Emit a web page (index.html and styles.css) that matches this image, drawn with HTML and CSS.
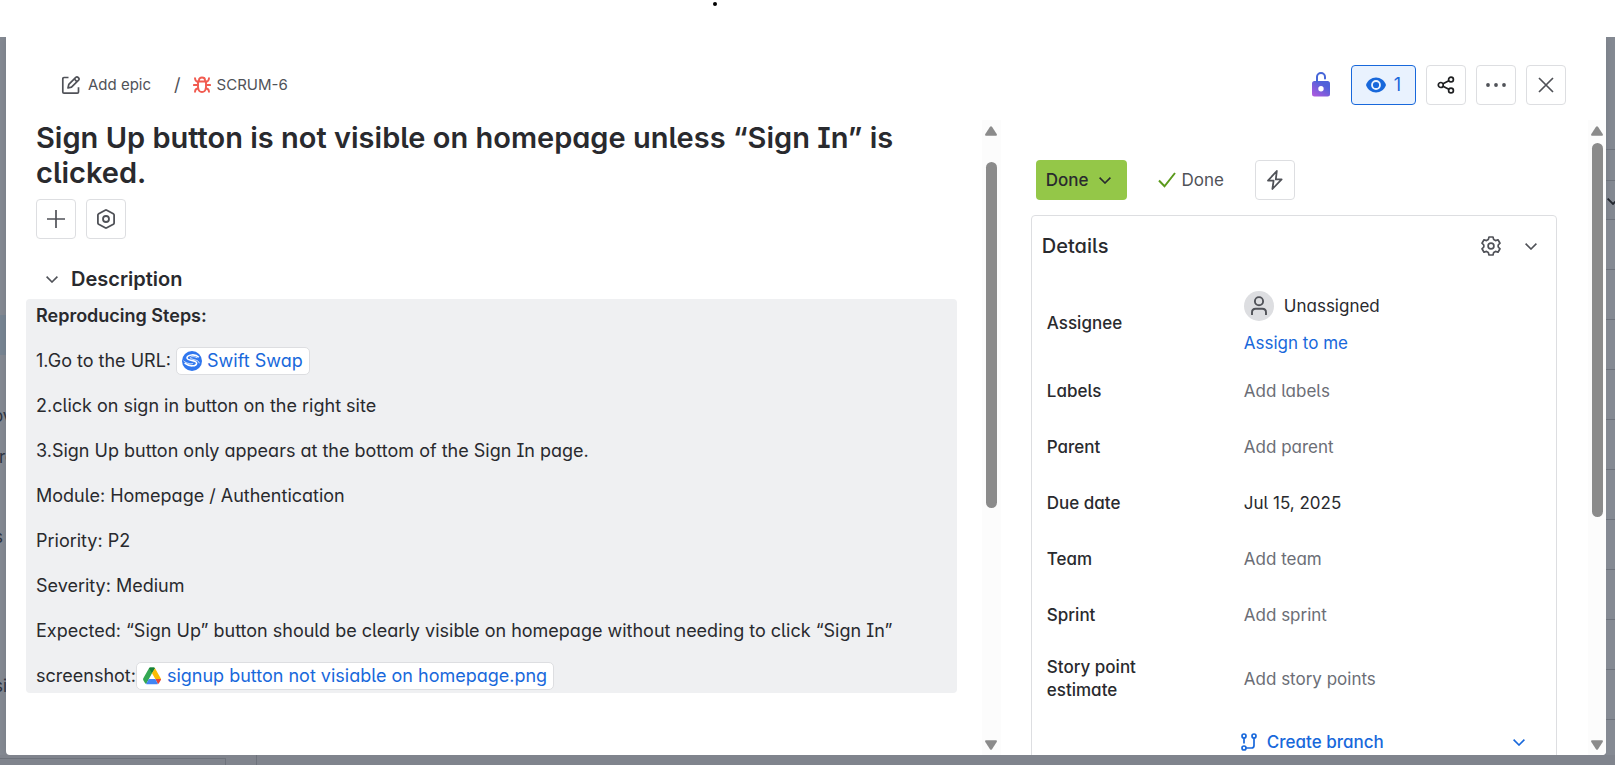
FILE: index.html
```html
<!DOCTYPE html>
<html lang="en">
<head>
<meta charset="utf-8">
<title>SCRUM-6</title>
<link rel="stylesheet" href="styles.css">
</head>
<body>
<div class="topbar"><span class="dot"></span></div>
<div class="stage">
  <div class="edge edge-left" aria-hidden="true">
    <span class="edge-band"></span>
    <span class="edge-text">ov</span>
    <span class="edge-text edge-r">re</span>
    <span class="edge-text edge-s">s</span>
    <span class="edge-text edge-si">si</span>
  </div>
  <main class="modal">
    <header class="header">
      <nav class="crumbs" aria-label="Breadcrumb">
        <a class="crumb" href="#">
          <svg width="20" height="20" viewBox="0 0 20 20" fill="none" stroke="#505258" stroke-width="1.7"><path d="M7.5 2.5H3Q1.8 2.5 1.8 3.7V17Q1.8 18.2 3 18.2H16.3Q17.5 18.2 17.5 17V12.2"/><path d="M7 13L7.8 9.4L14.8 2.4Q16 1.4 17.2 2.5Q18.8 3.9 17.6 5.2L10.5 12.2Z" stroke-linejoin="round"/><path d="M13.3 4L16.1 6.8"/></svg>
          <span>Add epic</span>
        </a>
        <span class="slash">/</span>
        <a class="crumb crumb-key" href="#">
          <svg width="18" height="18" viewBox="0 0 18 18" fill="none" stroke="#f15b50" stroke-width="1.9" stroke-linecap="round"><path d="M5 5.5H13V11.500Q12.500 16 9 16Q5.500 16 5 11.500Z"/><path d="M6 5.3V4Q6 1.5 9 1.5Q12 1.5 12 4V5.3M.9 9H5M13 9H17.1M2 2.3Q2.2 5.5 5 6M16 2.3Q15.8 5.5 13 6M5.3 12.2Q2.2 12.5 2 15.7M12.7 12.2Q15.8 12.5 16 15.7"/></svg>
          <span>SCRUM-6</span>
        </a>
      </nav>
      <div class="actions">
        <button class="lock" aria-label="Restrictions">
          <svg width="18" height="25" viewBox="0 0 18 25"><defs><linearGradient id="lg" x1="0" y1="1" x2=".8" y2="0"><stop offset="0" stop-color="#b558df"/><stop offset=".8" stop-color="#5061d9"/></linearGradient></defs><rect y="9" width="18" height="15.500" rx="2.500" fill="url(#lg)"/><path d="M5 9.500V5A4 4 0 0 1 13 5V6.500" fill="none" stroke="#4665d8" stroke-width="2" stroke-linecap="round"/><circle cx="9" cy="16.700" r="2.700" fill="#fff"/></svg>
        </button>
        <button class="btn watch" aria-label="Watchers: 1">
          <svg width="20" height="16" viewBox="0 0 20 16"><path d="M10 .5C14.500.500 18.300 3.300 20 8C18.300 12.700 14.500 15.500 10 15.500S1.700 12.700 0 8C1.700 3.300 5.500.500 10 .500Z" fill="#1868db"/><circle cx="10" cy="8" r="4" fill="#1868db" stroke="#e9f2fe" stroke-width="1.800"/></svg>
          <span>1</span>
        </button>
        <button class="btn" aria-label="Share">
          <svg width="18" height="18" viewBox="0 0 18 18" fill="none" stroke="#1e1f21" stroke-width="1.700"><circle cx="3.800" cy="9" r="2.500"/><circle cx="14" cy="3.500" r="2.400"/><circle cx="14" cy="14.500" r="2.400"/><path d="M6 7.800L11.800 4.700M6 10.200L11.800 13.300"/></svg>
        </button>
        <button class="btn" aria-label="More">
          <svg width="20" height="4" viewBox="0 0 20 4" fill="#505258"><circle cx="2" cy="2" r="1.900"/><circle cx="10" cy="2" r="1.900"/><circle cx="18" cy="2" r="1.900"/></svg>
        </button>
        <button class="btn" aria-label="Close">
          <svg width="16" height="16" viewBox="0 0 16 16" stroke="#505258" stroke-width="1.700"><path d="M1 1L15 15M15 1L1 15"/></svg>
        </button>
      </div>
    </header>
    <div class="panes">
      <section class="pane-main">
        <h1>Sign Up button is not visible on homepage unless “Sign In” is clicked.</h1>
        <div class="tools">
          <button class="btn" aria-label="Add"><svg width="18" height="18" viewBox="0 0 18 18" stroke="#505258" stroke-width="1.700"><path d="M9 0V18M0 9H18"/></svg></button>
          <button class="btn" aria-label="Apps"><svg width="20" height="20" viewBox="0 0 20 20" fill="none" stroke="#505258" stroke-width="1.800"><path d="M9.200 1.200Q10 .800 10.800 1.200L17.300 4.700Q18.100 5.200 18.100 6V14Q18.100 14.800 17.300 15.300L10.800 18.800Q10 19.200 9.200 18.800L2.700 15.300Q1.900 14.800 1.900 14V6Q1.900 5.200 2.700 4.700Z"/><circle cx="10" cy="10" r="3"/></svg></button>
        </div>
        <h2 class="section-title"><button class="plain" aria-label="Collapse description"><svg width="12" height="7" viewBox="0 0 12 7" fill="none" stroke="#505258" stroke-width="1.600"><path d="M.6.6L6 6L11.400.6"/></svg></button>Description</h2>
        <div class="description">
          <p><strong>Reproducing Steps:</strong></p>
          <p>1.Go to the URL: <a class="chip" href="#"><svg width="20" height="20" viewBox="0 0 20 20"><circle cx="10" cy="10" r="10" fill="#2f76ee"/><path d="M16.800 6.200C13.500 2.600 5.200 3.500 5 6.900C4.800 10.300 14.700 8.700 14.600 12.200C14.500 15.400 7.500 16 2.600 12.200" fill="none" stroke="#fff" stroke-width="1.600"/><path d="M15.300 6.800C11.500 4.800 8.100 5.700 8.200 6.900C8.400 8.500 17.200 8.500 17.300 12.300M1.500 9.800C4.500 12.800 10.600 13.400 11.200 12.200" fill="none" stroke="#fff" stroke-width=".8"/></svg>Swift Swap</a></p>
          <p>2.click on sign in button on the right site</p>
          <p>3.Sign Up button only appears at the bottom of the Sign In page.</p>
          <p>Module: Homepage / Authentication</p>
          <p>Priority: P2</p>
          <p>Severity: Medium</p>
          <p>Expected: “Sign Up” button should be clearly visible on homepage without needing to click “Sign In”</p>
          <p>screenshot:<a class="chip" href="#"><svg width="20" height="18" viewBox="-1 0 20 17"><path d="M6 .8Q6.400 0 7.300 0H10.700Q11.600 0 12 .8L9 5.700L3.200 16.500Q2.300 16.200 1.800 15.300L.3 12.700Q-.2 11.700.3 10.800Z" fill="#34a853"/><path d="M6 .8Q6.400 0 7.300 0H10.700Q11.600 0 12 .8L9 5.700Z" fill="#188038"/><path d="M12 .8L17.700 10.800Q18 11.300 18 11.500H12.300L9 5.700Z" fill="#fbbc04"/><path d="M12.300 11.500H18Q18 12.300 17.700 12.800L16.200 15.300Q15.800 16.200 14.900 16.500Z" fill="#ea4335"/><path d="M5.800 11.500H12.300L14.900 16.500Q14.500 16.700 14 16.700H4Q3.500 16.700 3.100 16.500Z" fill="#4285f4"/></svg>signup button not visiable on homepage.png</a></p>
        </div>
      </section>
      <div class="scroll scroll-main" aria-hidden="true">
        <svg width="12" height="10" viewBox="0 0 12 10"><path d="M5 .8Q6-.4 7 .8L11.700 8Q12.400 9.700 11 9.800H1Q-.4 9.700.3 8Z" fill="#8b8b8b"/></svg>
        <span class="thumb"></span>
        <svg class="down" width="12" height="10" viewBox="0 0 12 10"><path d="M5 9.200Q6 10.400 7 9.200L11.700 2Q12.400.300 11 .200H1Q-.4.300.3 2Z" fill="#8b8b8b"/></svg>
      </div>
      <aside class="pane-side">
        <div class="status">
          <button class="btn-status">Done<svg width="12" height="7" viewBox="0 0 12 7" fill="none" stroke="#292a2e" stroke-width="1.600"><path d="M.6.6L6 6L11.400.6"/></svg></button>
          <span class="resolution"><svg width="18" height="16" viewBox="0 0 18 16" fill="none" stroke="#5b9a1c" stroke-width="2"><path d="M1 8.500L6.500 14.300L17 1"/></svg>Done</span>
          <button class="btn" aria-label="Automation"><svg width="16" height="20" viewBox="0 0 16 20" fill="none" stroke="#505258" stroke-width="1.800" stroke-linejoin="round"><path d="M9.800 1L1 10.600H6.600L5.400 19L14.600 9.400H8.800Z"/></svg></button>
        </div>
        <section class="details">
          <div class="details-head">
            <h2>Details</h2>
            <button class="plain" aria-label="Configure"><svg width="20" height="20" viewBox="0 0 20 20" fill="none" stroke="#505258" stroke-width="1.700" stroke-linejoin="round"><path d="M8 1H12L12.700 3.600L14.500 4.600L17 3.800L19 7.200L17.200 9V11L19 12.800L17 16.200L14.500 15.400L12.700 16.400L12 19H8L7.300 16.400L5.500 15.400L3 16.200L1 12.800L2.800 11V9L1 7.200L3 3.800L5.500 4.600L7.300 3.600Z"/><circle cx="10" cy="10" r="2.900"/></svg></button>
            <button class="plain" aria-label="Collapse details"><svg width="12" height="7" viewBox="0 0 12 7" fill="none" stroke="#505258" stroke-width="1.600"><path d="M.6.6L6 6L11.400.6"/></svg></button>
          </div>
          <dl>
            <div class="row row-assignee"><dt>Assignee</dt><dd class="set">
              <span class="person"><span class="avatar"><svg width="18" height="20" viewBox="0 0 18 20" fill="none" stroke="#505258" stroke-width="1.900"><circle cx="9" cy="5.200" r="4.100"/><path d="M2 19V16.500Q2 12.800 5.700 12.800H12.300Q16 12.800 16 16.500V19"/></svg></span>Unassigned</span>
              <a href="#">Assign to me</a></dd></div>
            <div class="row"><dt>Labels</dt><dd>Add labels</dd></div>
            <div class="row"><dt>Parent</dt><dd>Add parent</dd></div>
            <div class="row"><dt>Due date</dt><dd class="set">Jul 15, 2025</dd></div>
            <div class="row"><dt>Team</dt><dd>Add team</dd></div>
            <div class="row"><dt>Sprint</dt><dd>Add sprint</dd></div>
            <div class="row row-story"><dt>Story point estimate</dt><dd>Add story points</dd></div>
          </dl>
          <div class="branch">
            <a href="#"><svg width="16" height="18" viewBox="0 0 16 18" fill="none" stroke="#1868db" stroke-width="1.700"><circle cx="3" cy="3" r="2"/><circle cx="13" cy="3" r="2"/><circle cx="3" cy="15" r="2"/><path d="M3 5V10.500M13 5V12.500Q13 15 10.500 15H5"/></svg>Create branch</a>
            <button class="plain" aria-label="Branch options"><svg width="12" height="7" viewBox="0 0 12 7" fill="none" stroke="#1868db" stroke-width="1.600"><path d="M.6.6L6 6L11.400.6"/></svg></button>
          </div>
        </section>
      </aside>
      <div class="scroll scroll-side" aria-hidden="true">
        <svg width="12" height="10" viewBox="0 0 12 10"><path d="M5 .8Q6-.4 7 .8L11.700 8Q12.400 9.700 11 9.800H1Q-.4 9.700.3 8Z" fill="#8b8b8b"/></svg>
        <span class="thumb"></span>
        <svg class="down" width="12" height="10" viewBox="0 0 12 10"><path d="M5 9.200Q6 10.400 7 9.200L11.700 2Q12.400.300 11 .200H1Q-.4.300.3 2Z" fill="#8b8b8b"/></svg>
      </div>
    </div>
  </main>
  <div class="edge edge-right" aria-hidden="true">
    <span class="edge-head"></span>
    <span class="edge-head2"><svg width="12" height="7" viewBox="0 0 12 7" fill="none" stroke="#22262d" stroke-width="1.800"><path d="M.6.6L6 6L11.400.6"/></svg></span>
    <span class="edge-rows"></span>
  </div>
</div>
<div class="bottom" aria-hidden="true"><span class="bottom-a"></span><span class="bottom-b"></span></div>
</body>
</html>
```
FILE: styles.css
```css
* { box-sizing: border-box; }
body {
  margin: 0;
  height: 100vh;
  display: flex;
  flex-direction: column;
  overflow: hidden;
  background: #858a93;
  color: #292a2e;
  font: 17px/24px Inter, "Liberation Sans", sans-serif;
  font-feature-settings: "cv11", "cv05", "cv08";
}
h1, h2, p, dl, dd { margin: 0; }
a { color: #1868db; text-decoration: none; }
button { font: inherit; font-feature-settings: inherit; color: inherit; padding: 0; cursor: pointer; }
svg { display: block; flex: none; }

.topbar { flex: none; position: relative; z-index: 1; height: 37px; background: #fff; display: flex; justify-content: center; padding: 2px 186px 0 0; }
.dot { width: 4px; height: 4px; border-radius: 50%; background: #000; }

.stage { flex: 1; min-height: 0; display: flex; }
.edge { flex: none; overflow: hidden; display: flex; flex-direction: column; }
.edge-left { width: 6px; color: #2c3340; }
.edge-band { flex: none; height: 40px; margin: 278px 0 49px; background: #788593; }
.edge-text { flex: none; height: 24px; margin-bottom: 17px; width: 20px; margin-left: -7px; }
.edge-r { margin-left: -1px; }
.edge-s { margin: 39px 0 125px -6px; }
.edge-si { margin-left: -6px; }
.edge-right { width: 9px; }
.edge-head { flex: none; height: 113px; border-bottom: 1px solid #6e737c; }
.edge-head2 { flex: none; height: 70px; padding: 48px 0 0 1px; border-bottom: 1px solid #6e737c; background: linear-gradient(#6e737c, #6e737c) 0 30px / 100% 1px no-repeat; }
.edge-rows { flex: 1; background: repeating-linear-gradient(#858a93 0 49px, #6e737c 49px 50px); }
.bottom { flex: none; height: 10px; display: flex; background: #80848d; }
.bottom-a { width: 226px; border: solid #6e737c; border-width: 1px 1px 0 0; margin-top: 3px; }
.bottom-b { width: 31px; border-right: 1px solid #6e737c; }

.modal { flex: 1; min-width: 0; display: flex; flex-direction: column; background: #fff; border-radius: 0 0 4px 4px; overflow: hidden; box-shadow: 0 0 8px #4a4f5940; }
.header { flex: none; height: 83px; display: flex; justify-content: space-between; align-items: center; padding: 12px 40px 0 55px; }
.crumbs { display: flex; align-items: center; font-size: 15px; color: #505258; font-feature-settings: normal; }
.crumb { display: flex; align-items: center; gap: 7px; color: #505258; }
.crumb-key { gap: 6px; }
.slash { margin: 0 12px 0 23px; font-size: 18px; }
.actions { display: flex; align-items: center; gap: 10px; }
.lock { border: 0; background: none; margin-right: 11px; }
.btn { width: 40px; height: 40px; display: flex; align-items: center; justify-content: center; background: #fff; border: 1px solid #dddee1; border-radius: 4px; }
.watch { width: 65px; gap: 8px; background: #e9f2fe; border-color: #1868db; color: #1868db; font-size: 18px; font-feature-settings: normal; }
.plain { border: 0; background: none; }

.panes { flex: 1; min-height: 0; display: flex; }
.pane-main { flex: 1; min-width: 0; overflow: hidden; padding: 0 25px 0 20px; }
.pane-main h1 { padding: 0 16px 0 10px; font-size: 29px; line-height: 35px; font-weight: 600; }
.tools { display: flex; gap: 10px; padding: 9px 10px 0; }
.section-title { display: flex; align-items: center; gap: 13px; height: 40px; margin: 20px 0 0 20px; font-size: 20px; font-weight: 600; }
.description { padding: 3px 10px 4px; display: flex; flex-direction: column; gap: 18px; background: #eff0f2; border-radius: 4px; font-size: 18px; line-height: 27px; }
.description p { display: flex; align-items: center; white-space: pre-wrap; height: 27px; }
.description strong { font-weight: 600; }
.chip { display: inline-flex; align-items: center; gap: 5px; height: 28px; padding: 0 6px 0 5px; background: #fff; border: 1px solid #dddee1; border-radius: 5px; line-height: 24px; }

.scroll { flex: none; display: flex; flex-direction: column; align-items: center; background: #fcfcfc; padding: 6px 0 5px; }
.scroll-main { width: 19px; }
.scroll-side { width: 18px; }
.thumb { width: 11px; border-radius: 6px; background: #8b8b8b; }
.scroll-main .thumb { margin-top: 26px; height: 55.5%; }
.scroll-side .thumb { margin-top: 7px; height: 60%; }
.down { margin-top: auto; }

.pane-side { flex: none; width: 36.7%; overflow: hidden; padding: 40px 31px 0 30px; }
.status { display: flex; align-items: center; padding-left: 5px; }
.btn-status { display: flex; align-items: center; gap: 10px; height: 40px; padding: 0 16px 0 10px; border: 0; border-radius: 4px; background: #94c748; font-weight: 500; }
.resolution { display: flex; align-items: center; gap: 6px; margin: 0 31px; color: #505258; }
.details { margin-top: 15px; border: 1px solid #dddee1; border-radius: 4px 4px 0 0; }
.details-head { display: flex; align-items: center; gap: 24px; height: 60px; padding: 0 19px 0 10px; }
.details-head h2 { flex: 1; font-size: 20px; font-weight: 500; }
dl { padding: 7px 15px 0; }
.row { display: grid; grid-template-columns: 152px 1fr; column-gap: 45px; align-items: center; min-height: 56px; }
.row-assignee { min-height: 80px; }
.row-story { min-height: 72px; }
dt { font-weight: 500; line-height: 23px; max-width: 110px; }
dd { color: #6b6e76; }
dd.set { color: #292a2e; }
.person { display: flex; align-items: center; gap: 10px; margin-bottom: 10px; }
.avatar { width: 30px; height: 30px; border-radius: 50%; background: #dddee1; display: flex; align-items: center; justify-content: center; }
.branch { display: flex; align-items: center; justify-content: space-between; height: 54px; padding: 0 31px 0 209px; font-weight: 500; }
.branch a { display: flex; align-items: center; gap: 10px; }
```
